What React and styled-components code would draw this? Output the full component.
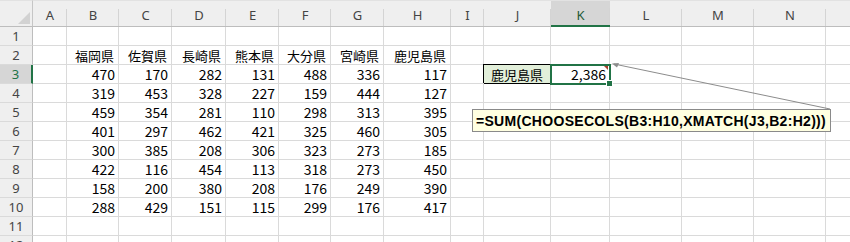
import styled, { createGlobalStyle } from "styled-components";

const GlobalStyle = createGlobalStyle`
  html, body {
    margin: 0;
    padding: 0;
    background: #ffffff;
    overflow: hidden;
  }
`;

// the last column (O) lies mostly outside the window, so its letter is not shown
const COLS = ["A", "B", "C", "D", "E", "F", "G", "H", "I", "J", "K", "L", "M", "N", ""];
const WIDTHS = [33, 34, 52, 53, 54, 53, 52, 53, 67, 33, 67, 59, 72, 72, 72, 72];

const PREFS = ["福岡県", "佐賀県", "長崎県", "熊本県", "大分県", "宮崎県", "鹿児島県"];
const DATA = [
  [470, 170, 282, 131, 488, 336, 117],
  [319, 453, 328, 227, 159, 444, 127],
  [459, 354, 281, 110, 298, 313, 395],
  [401, 297, 462, 421, 325, 460, 305],
  [300, 385, 208, 306, 323, 273, 185],
  [422, 116, 454, 113, 318, 273, 450],
  [158, 200, 380, 208, 176, 249, 390],
  [288, 429, 151, 115, 299, 176, 417],
];

const GREEN = "#217346";

// builds the content of one sheet row: index 0 = column A
const rowValues = (r) => {
  const cells = Array(COLS.length).fill("");
  if (r === 2) PREFS.forEach((p, i) => (cells[i + 1] = p));
  if (r >= 3 && r <= 10) DATA[r - 3].forEach((v, i) => (cells[i + 1] = String(v)));
  if (r === 3) {
    cells[9] = "鹿児島県";
    cells[10] = "2,386";
  }
  return cells;
};

const App = () => {
  const rows = Array.from({ length: 12 }, (_, i) => i + 1);

  return (
    <>
      <GlobalStyle />
      <Sheet>
        <Grid $widths={WIDTHS}>
          <Corner>
            <svg width="12" height="12" viewBox="0 0 12 12">
              <polygon points="12,0 12,12 0,12" fill="#d2d2d2" />
            </svg>
          </Corner>
          {COLS.map((c, i) => (
            <ColHeader key={i} $active={c === "K"}>
              {c}
            </ColHeader>
          ))}

          {rows.map((r) => (
            <Row key={r} r={r} />
          ))}
        </Grid>

        <Leader viewBox="0 0 850 242" width="850" height="242">
          <line x1="614" y1="64" x2="830" y2="109" stroke="#8c8c8c" strokeWidth="1" />
          <polygon points="612,63.5 619,63 617,67.5" fill="#8c8c8c" />
        </Leader>

        <Comment>=SUM(CHOOSECOLS(B3:H10,XMATCH(J3,B2:H2)))</Comment>
      </Sheet>
    </>
  );
};

const Row = ({ r }) => {
  const cells = rowValues(r);
  return (
    <>
      <RowHeader $active={r === 3}>{r}</RowHeader>
      {cells.map((v, i) => {
        if (r === 3 && i === 9) return <LabelCell key={i}>{v}</LabelCell>;
        if (r === 3 && i === 10) return <ActiveCell key={i}>{v}</ActiveCell>;
        return (
          <Cell key={i} $cjk={r === 2}>
            {v}
          </Cell>
        );
      })}
    </>
  );
};

const Sheet = styled.div`
  position: relative;
  width: 850px;
  height: 242px;
  overflow: hidden;
  background: #ffffff;
`;

const Grid = styled.div`
  display: grid;
  grid-template-columns: ${(p) => p.$widths.map((w) => `${w}px`).join(" ")};
  grid-template-rows: 27px repeat(12, 19px);
  width: max-content;
  font-family: "Noto Sans CJK JP", "Noto Sans", sans-serif;
  font-size: 13px;
  color: #000000;
`;

const HeaderBase = styled.div`
  box-sizing: border-box;
  background: #efefef;
  color: #444444;
  font-family: "Noto Sans", "Liberation Sans", sans-serif;
  font-size: 13px;
  display: flex;
  align-items: center;
  justify-content: center;
`;

const Corner = styled(HeaderBase)`
  border-top: 1px solid #e2e2e2;
  border-right: 1px solid #c6c6c6;
  border-bottom: 1px solid #bdbdbd;
  align-items: flex-end;
  justify-content: flex-end;
  padding: 0 2px 2px 0;
`;

const ColHeader = styled(HeaderBase)`
  border-top: 1px solid #e2e2e2;
  border-bottom: ${(p) => (p.$active ? `2px solid ${GREEN}` : "1px solid #bdbdbd")};
  background: linear-gradient(#d4d4d4, #d4d4d4) right bottom / 1px 17px no-repeat,
    ${(p) => (p.$active ? "#d6d6d6" : "#efefef")};
  color: ${(p) => (p.$active ? "#1e5a38" : "#444444")};
  padding-top: ${(p) => (p.$active ? "3px" : "2px")};
`;

const RowHeader = styled(HeaderBase)`
  border-bottom: 1px solid #dadada;
  border-right: ${(p) => (p.$active ? `2px solid ${GREEN}` : "1px solid #bdbdbd")};
  background: ${(p) => (p.$active ? "#d6d6d6" : "#efefef")};
  color: ${(p) => (p.$active ? GREEN : "#444444")};
`;

const Cell = styled.div`
  box-sizing: border-box;
  border-right: 1px solid #dadada;
  border-bottom: 1px solid #dadada;
  display: flex;
  align-items: center;
  justify-content: flex-end;
  padding-right: ${(p) => (p.$cjk ? "4px" : "3px")};
  font-size: ${(p) => (p.$cjk ? "13px" : "14px")};
  line-height: 1;
  white-space: nowrap;
`;

const LabelCell = styled(Cell)`
  justify-content: center;
  padding-right: 0;
  font-size: 13px;
  background: #e2efda;
  border-right-color: #000000;
  border-bottom-color: #000000;
  box-shadow: -1px -1px 0 0 #000000;
`;

const ActiveCell = styled(Cell)`
  position: relative;
  z-index: 1;
  outline: 2px solid ${GREEN};
  outline-offset: -1px;

  &::before {
    content: "";
    position: absolute;
    top: 1px;
    right: 1px;
    border-top: 4px solid #a5402a;
    border-left: 4px solid transparent;
  }

  &::after {
    content: "";
    position: absolute;
    right: -3px;
    bottom: -3px;
    width: 5px;
    height: 5px;
    background: ${GREEN};
    box-shadow: 0 0 0 1px #ffffff;
  }
`;

const Leader = styled.svg`
  position: absolute;
  left: 0;
  top: 0;
  pointer-events: none;
  z-index: 2;
`;

const Comment = styled.div`
  position: absolute;
  left: 472px;
  top: 109px;
  width: 359px;
  height: 23px;
  box-sizing: border-box;
  z-index: 3;
  background: #ffffe1;
  border: 1px solid #8a8a8a;
  padding: 0 0 0 3px;
  display: flex;
  align-items: center;
  font-family: "Liberation Sans", Arial, sans-serif;
  font-weight: bold;
  font-size: 14px;
  letter-spacing: 0.3px;
  color: #000000;
  white-space: nowrap;
`;

export default App;
